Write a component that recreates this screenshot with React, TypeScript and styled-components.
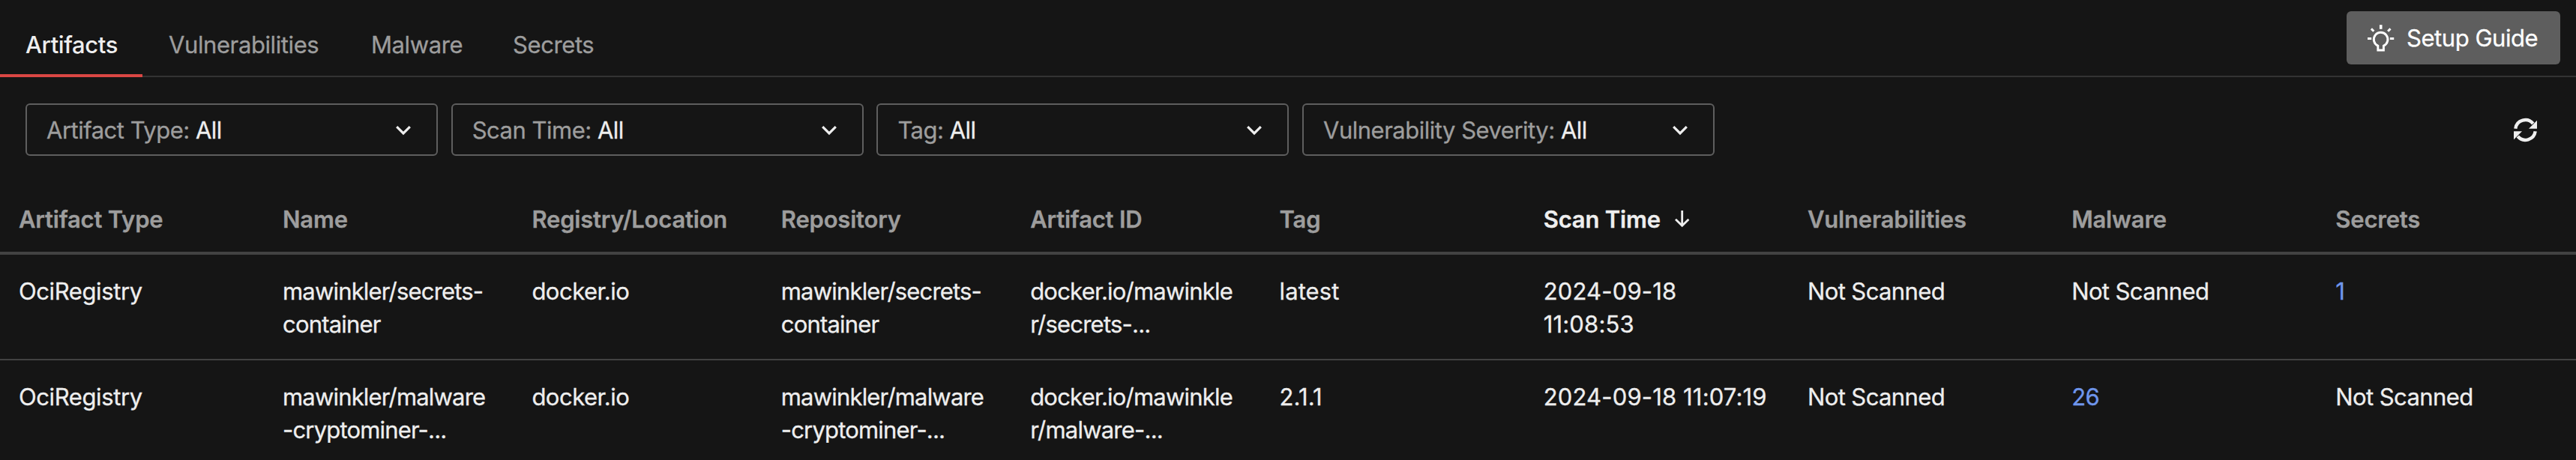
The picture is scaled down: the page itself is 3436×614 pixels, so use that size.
import React from 'react';
import styled, { createGlobalStyle } from 'styled-components';

const GlobalStyle = createGlobalStyle`
  * { box-sizing: border-box; }
  body {
    margin: 0;
    background: #151515;
    color: #eeeeee;
    font-family: Inter, sans-serif;
    font-size: 31px;
    font-weight: 400;
    line-height: 44px;
    letter-spacing: -0.45px;
    -webkit-text-stroke: 0.3px currentColor;
  }
`;

const Page = styled.main`
  height: 614px;
  overflow: hidden;
  background: #151515;
`;

const TopBar = styled.header`
  display: flex;
  justify-content: space-between;
  height: 103px;
  border-bottom: 2px solid #333333;
`;

const TabList = styled.nav`
  display: flex;
  height: 103px;
`;

const Tab = styled.a<{ $width: number; $active?: boolean }>`
  width: ${(p) => p.$width}px;
  height: 103px;
  padding: 38px 0 0 ${(p) => (p.$active ? 34 : 35)}px;
  white-space: nowrap;
  color: ${(p) => (p.$active ? '#eeeeee' : '#9d9d9d')};
  border-bottom: ${(p) => (p.$active ? '4px solid #da4744' : '0')};
  letter-spacing: ${(p) => (p.$active ? '-0.4px' : '-0.4px')};
  font-weight: ${(p) => (p.$active ? 500 : 400)};
  -webkit-text-stroke-width: ${(p) => (p.$active ? 0 : 0.3)}px;
`;

const GuideButton = styled.button`
  display: flex;
  align-items: center;
  width: 285px;
  height: 71px;
  margin: 15px 21px 0 0;
  padding: 0 0 0 24px;
  gap: 12px;
  border: 0;
  border-radius: 6px;
  background: #5e5e5e;
  color: #ffffff;
  font: inherit;
  letter-spacing: inherit;
  white-space: nowrap;
`;

const Filters = styled.section`
  display: flex;
  align-items: center;
  gap: 17.7px;
  padding: 35px 48px 0 34px;
`;

const Select = styled.div`
  display: flex;
  align-items: center;
  justify-content: space-between;
  width: 550px;
  height: 70px;
  padding: 2px 34px 0 26px;
  border: 2px solid #5e5e5e;
  border-radius: 6px;
  color: #9d9d9d;
  white-space: nowrap;
  letter-spacing: -0.5px;
`;

const Value = styled.span`
  color: #eeeeee;
`;

const Refresh = styled.button`
  display: flex;
  margin-left: auto;
  padding: 0;
  border: 0;
  background: none;
`;

const Table = styled.div`
  margin-top: 31px;
`;

const Row = styled.div<{ $head?: boolean }>`
  display: grid;
  grid-template-columns: 352px repeat(4, 332.4px) repeat(4, 352.2px) 1fr;
  height: ${(p) => (p.$head ? 101 : 141)}px;
  padding-top: ${(p) => (p.$head ? 32 : 27)}px;
  border-bottom: ${(p) => (p.$head ? '4px' : '2px')} solid #424242;
  color: ${(p) => (p.$head ? '#9d9d9d' : '#eeeeee')};
  font-weight: ${(p) => (p.$head ? 600 : 400)};
`;

const Cell = styled.div<{ $sorted?: boolean; $link?: boolean; $tracking?: number }>`
  display: flex;
  align-items: flex-start;
  padding-left: 25px;
  white-space: pre;
  color: ${(p) => (p.$sorted ? '#eeeeee' : p.$link ? '#6f96ec' : 'inherit')};
  letter-spacing: ${(p) => p.$tracking ?? -0.2}px;
  -webkit-text-stroke-color: currentColor;
`;

const SortIcon = styled.svg`
  margin: 10px 0 0 19px;
`;

const Chevron = () => (
  <svg width="20" height="13" viewBox="0 0 20 13" fill="none">
    <path d="M1.200 1.200L10 10L18.800 1.200" stroke="#eeeeee" strokeWidth="3.200" />
  </svg>
);

const Bulb = () => (
  <svg width="44" height="44" viewBox="0 0 44 44" fill="none" stroke="#fff">
    <path d="M17.800 38V32.100A9.300 9.300 0 1 1 25.400 32.100V38Z" strokeWidth="2.900" />
    <path d="M21.700 4.200V9.800" strokeWidth="3.600" />
    <path
      d="M4 22.500H9.200M33.800 22.500H39.200M8.900 9.400L12.300 12.800M34.500 9.400L31.100 12.800"
      strokeWidth="3"
    />
  </svg>
);

const RefreshIcon = () => (
  <svg width="40" height="40" viewBox="0 0 40 40" fill="none">
    <path
      d="M7.300 18.700A13.300 13.300 0 0 1 30.700 12M33.700 22.300A13.300 13.300 0 0 1 10.300 29"
      stroke="#eeeeee"
      strokeWidth="4.400"
    />
    <path d="M36 7.700V18.700H25Z M5 33.300V22.300H16Z" fill="#eeeeee" />
  </svg>
);

const filters = ['Artifact Type', 'Scan Time', 'Tag', 'Vulnerability Severity'];

const headings = [
  'Artifact Type', 'Name', 'Registry/Location', 'Repository', 'Artifact ID',
  'Tag', 'Scan Time', 'Vulnerabilities', 'Malware', 'Secrets',
];

// Letter spacing of the body cells, by column.
const tracking = [-0.4, -0.82, -0.5, -0.82, -0.78, 0.1, 0.15, -0.6, -0.6, -0.6];

const rows = [
  ['OciRegistry', 'mawinkler/secrets-\ncontainer', 'docker.io', 'mawinkler/secrets-\ncontainer',
    'docker.io/mawinkle\nr/secrets-...', 'latest', '2024-09-18\n11:08:53', 'Not Scanned', 'Not Scanned', '1'],
  ['OciRegistry', 'mawinkler/malware\n-cryptominer-...', 'docker.io', 'mawinkler/malware\n-cryptominer-...',
    'docker.io/mawinkle\nr/malware-...', '2.1.1', '2024-09-18 11:07:19', 'Not Scanned', '26', 'Not Scanned'],
];

export default function App() {
  return (
    <Page>
      <GlobalStyle />
      <TopBar>
        <TabList>
          <Tab $width={190} $active>Artifacts</Tab>
          <Tab $width={270}>Vulnerabilities</Tab>
          <Tab $width={189}>Malware</Tab>
          <Tab $width={180}>Secrets</Tab>
        </TabList>
        <GuideButton>
          <Bulb />
          Setup Guide
        </GuideButton>
      </TopBar>
      <Filters>
        {filters.map((label) => (
          <Select key={label}>
            <span>{label}: <Value>All</Value></span>
            <Chevron />
          </Select>
        ))}
        <Refresh aria-label="Refresh">
          <RefreshIcon />
        </Refresh>
      </Filters>
      <Table>
        <Row $head>
          {headings.map((h) => (
            <Cell key={h} $sorted={h === 'Scan Time'}>
              {h}
              {h === 'Scan Time' && (
                <SortIcon width="20" height="23" viewBox="0 0 20 23" fill="none">
                  <path d="M9.700 0V20M1 11.800L9.700 20.300L18.400 11.800" stroke="#eeeeee" strokeWidth="2.800" />
                </SortIcon>
              )}
            </Cell>
          ))}
        </Row>
        {rows.map((row, r) => (
          <Row key={r}>
            {row.map((text, c) => (
              <Cell key={c} $tracking={tracking[c]} $link={c > 7 && /^\d+$/.test(text)}>{text}</Cell>
            ))}
          </Row>
        ))}
      </Table>
    </Page>
  );
}
